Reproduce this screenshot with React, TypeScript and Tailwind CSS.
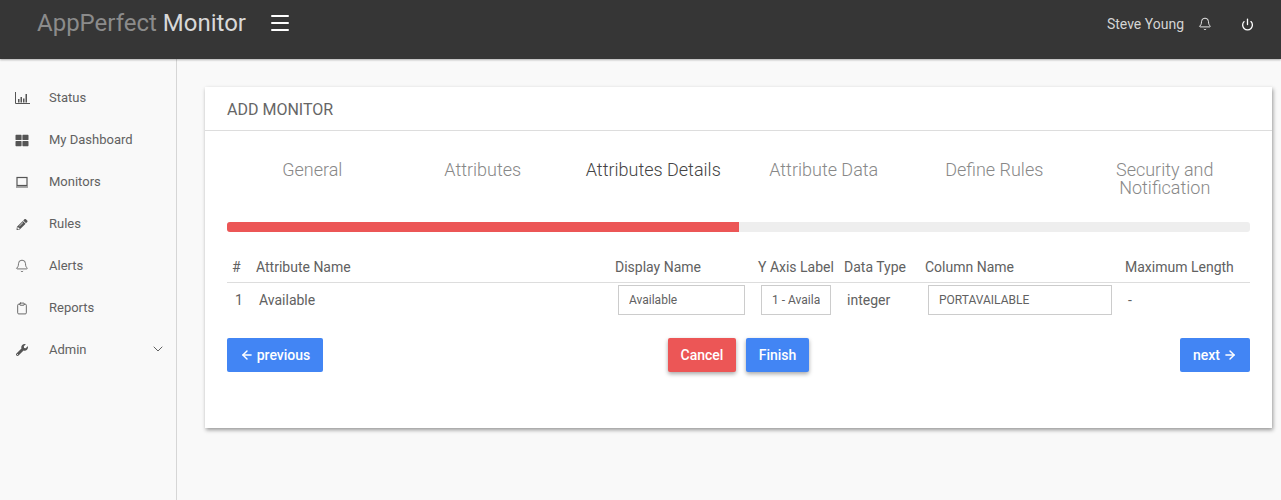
import { ArrowLeft, ArrowRight, Bell, ChevronDown, Clipboard, Menu, Power } from 'lucide-react';
import { FaPencilAlt, FaThLarge, FaWrench } from 'react-icons/fa';

const StatusIcon = () => (
  <svg width="15" height="14" viewBox="0 0 15 14" className="text-[#555555] shrink-0">
    <path d="M0.5 1v11.5H15" fill="none" stroke="currentColor" />
    <path d="M3 8h1.5v3.5H3zM5.5 6H7v5.5H5.5zM8 7.5h1.5v4H8zM10.5 3H12v8.5h-1.5z" fill="currentColor" />
  </svg>
);

const MonitorIcon = () => (
  <svg width="14" height="14" viewBox="0 0 14 14" className="text-[#555555] shrink-0">
    <rect x="2" y="2.5" width="10" height="8" fill="none" stroke="currentColor" strokeWidth="1.2" />
    <path d="M1 11.5h12v1H1z" fill="currentColor" />
  </svg>
);

const navItems = [
  { label: 'Status', icon: <StatusIcon /> },
  { label: 'My Dashboard', icon: <FaThLarge size={13} className="text-[#555555] shrink-0 w-[14px]" /> },
  { label: 'Monitors', icon: <MonitorIcon /> },
  { label: 'Rules', icon: <FaPencilAlt size={11} className="text-[#555555] shrink-0 w-[14px]" /> },
  { label: 'Alerts', icon: <Bell size={14} strokeWidth={1.4} className="text-[#555555] shrink-0" /> },
  { label: 'Reports', icon: <Clipboard size={13} strokeWidth={1.6} className="text-[#555555] shrink-0 w-[14px]" /> },
  { label: 'Admin', icon: <FaWrench size={12} className="text-[#555555] shrink-0 w-[14px]" /> },
];

const steps = ['General', 'Attributes', 'Attributes Details', 'Attribute Data', 'Define Rules', 'Security and Notification'];

const App = () => {
  return (
    <div className="min-h-[500px] bg-[#f9f9f9] font-['Roboto',sans-serif] text-[#616161] overflow-hidden">
      <header className="h-[59px] bg-[#363636] flex items-start pl-[37px] pr-[27px] shadow-[0_1px_2px_rgba(0,0,0,0.3)] relative">
        <div className="text-[24px] leading-[46px] text-[#8b8b8b]">
          AppPerfect <span className="text-[#d8d8d8]">Monitor</span>
        </div>
        <Menu className="ml-[22px] mt-[11px] text-white" size={24} strokeWidth={2} />
        <div className="ml-auto flex items-center h-[48px]">
          <span className="text-[14px] text-[#d4d4d4]">Steve Young</span>
          <Bell className="ml-[14px] text-white" size={14} strokeWidth={1.5} />
          <Power className="ml-[29px] text-white" size={13} strokeWidth={2.4} />
        </div>
      </header>

      <div className="flex">
        <aside className="w-[177px] h-[441px] shrink-0 border-r border-[#d6d6d6] pt-[18px]">
          {navItems.map((item) => (
            <div key={item.label} className="h-[42px] flex items-center pl-[15px] pr-[10px] text-[13px]">
              <span className="w-[34px] shrink-0 flex items-center">{item.icon}</span>
              <span>{item.label}</span>
              {item.label === 'Admin' && <ChevronDown size={16} strokeWidth={1.5} className="ml-auto mt-[-3px]" />}
            </div>
          ))}
        </aside>

        <main className="flex-1 pt-[28px] pl-[28px] pr-[9px]">
          <div className="bg-white h-[341px] shadow-[1px_2px_4px_rgba(0,0,0,0.4)]">
            <div className="h-[44px] border-b border-[#dddddd] pl-[22px] pt-[3px] flex items-center text-[16px] leading-none text-[#666666]">
              ADD MONITOR
            </div>
            <div className="px-[22px]">
              <div className="grid grid-cols-6 pt-[30px] h-[91px]">
                {steps.map((step) => (
                  <div
                    key={step}
                    className={`text-center text-[18px] leading-[18px] font-light ${step === 'Attributes Details' ? 'text-[#444444]' : 'text-[#888888]'} ${step === 'Security and Notification' ? 'px-[20px]' : 'px-[10px]'}`}
                  >
                    {step}
                  </div>
                ))}
              </div>
              <div className="h-[10px] rounded-[3px] bg-[#eeeeee] overflow-hidden">
                <div className="h-full w-1/2 bg-[#ec5656]" />
              </div>

              <table className="w-[1023px] table-fixed mt-[20px] text-[14px] border-collapse">
                <colgroup>
                  <col className="w-[23px]" />
                  <col className="w-[359px]" />
                  <col className="w-[143px]" />
                  <col className="w-[86px]" />
                  <col className="w-[81px]" />
                  <col className="w-[200px]" />
                  <col className="w-[131px]" />
                </colgroup>
                <thead>
                  <tr className="h-[30px] border-b border-[#dddddd] text-left">
                    {['#', 'Attribute Name', 'Display Name', 'Y Axis Label', 'Data Type', 'Column Name', 'Maximum Length'].map((h) => (
                      <th key={h} className={`font-normal whitespace-nowrap pt-[2px] ${h === '#' ? 'pl-[5px]' : 'pl-[6px]'}`}>{h}</th>
                    ))}
                  </tr>
                </thead>
                <tbody>
                  <tr className="h-[36px]">
                    <td className="pl-[8px]">1</td>
                    <td className="pl-[9px]">Available</td>
                    <td className="pl-[9px]">
                      <input readOnly value="Available" className="w-[127px] h-[30px] block border border-[#cccccc] px-[10px] text-[12px] text-[#616161] outline-none" />
                    </td>
                    <td className="pl-[9px]">
                      <input readOnly value="1 - Available" className="w-[70px] h-[30px] block border border-[#cccccc] px-[10px] text-[12px] text-[#616161] outline-none" />
                    </td>
                    <td className="pl-[9px]">integer</td>
                    <td className="pl-[9px]">
                      <input readOnly value="PORTAVAILABLE" className="w-[184px] h-[30px] block border border-[#cccccc] px-[10px] text-[12px] text-[#616161] outline-none" />
                    </td>
                    <td className="pl-[9px]">-</td>
                  </tr>
                </tbody>
              </table>

              <div className="flex items-start justify-between mt-[20px]">
                <button className="w-[96px] h-[34px] rounded-[2px] bg-[#4285f4] text-white text-[14px] font-medium flex items-center justify-center gap-[3px]">
                  <ArrowLeft size={14} strokeWidth={2.5} />
                  previous
                </button>
                <div className="flex gap-[10px] ml-[-26px]">
                  <button className="w-[68px] h-[34px] rounded-[2px] bg-[#ec5656] text-white text-[14px] font-medium shadow-[0_2px_4px_rgba(0,0,0,0.35)]">Cancel</button>
                  <button className="w-[63px] h-[34px] rounded-[2px] bg-[#4285f4] text-white text-[14px] font-medium shadow-[0_2px_4px_rgba(0,0,0,0.35)]">Finish</button>
                </div>
                <button className="w-[70px] h-[34px] rounded-[2px] bg-[#4285f4] text-white text-[14px] font-medium flex items-center justify-center gap-[3px]">
                  next
                  <ArrowRight size={14} strokeWidth={2.5} />
                </button>
              </div>
            </div>
          </div>
        </main>
      </div>
    </div>
  );
};

export default App;
